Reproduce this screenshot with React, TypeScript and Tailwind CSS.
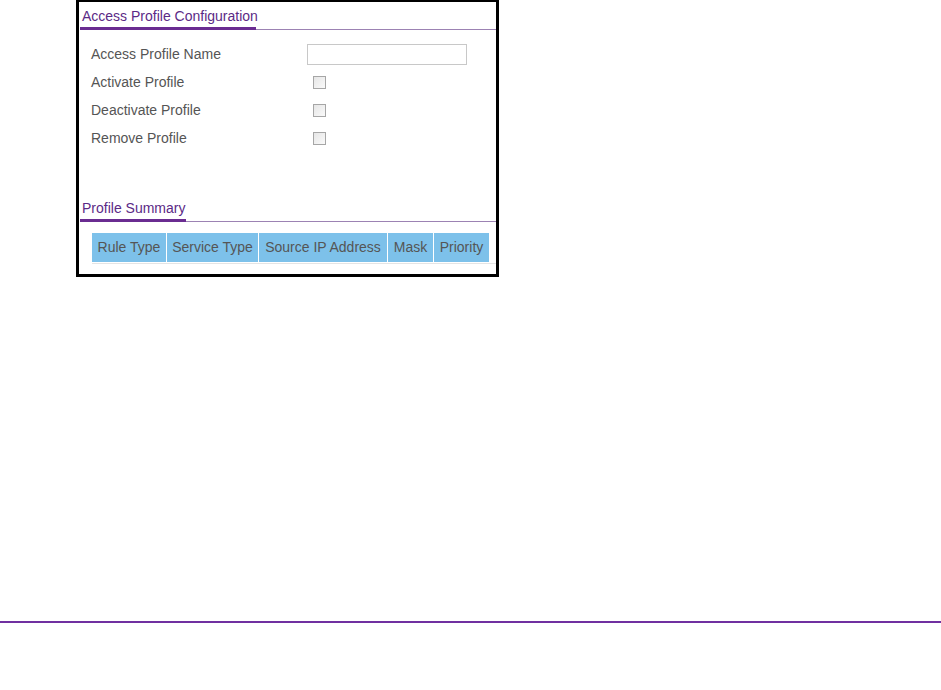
const font = { fontFamily: '"Liberation Sans", Arial, sans-serif' };

const rows = ["Activate Profile", "Deactivate Profile", "Remove Profile"];
const columns = [
  { label: "Rule Type", w: "w-[74px]" },
  { label: "Service Type", w: "w-[91px]" },
  { label: "Source IP Address", w: "w-[128px]" },
  { label: "Mask", w: "w-[45px]" },
  { label: "Priority", w: "w-[55px]" },
];

function SectionTitle({ title, underline }: { title: string; underline: string }) {
  return (
    <div className="flex items-end border-b border-[#9c82b3]">
      <div className={`${underline} -mb-px border-b-[3px] border-[#6a2c91] pb-[3px] pl-[2px] text-[14px] leading-[16px] whitespace-nowrap text-[#5b2a86]`}>
        {title}
      </div>
    </div>
  );
}

function Checkbox() {
  return (
    <span className="block h-[13px] w-[13px] border border-[#a6a6a6] bg-gradient-to-br from-[#e6e6e6] to-[#fafafa]" />
  );
}

export default function App() {
  return (
    <div className="relative h-[690px] w-[941px] bg-white" style={font}>
      <div className="ml-[76px] flex h-[277px] w-[423px] flex-col border-[3px] border-t-[2px] border-black pt-[6px] pl-[1px]">
        <SectionTitle title="Access Profile Configuration" underline="w-[176px]" />
        <div className="mt-[14px] flex h-[20px] items-center pl-[11px] text-[14px] text-[#555]">
          <span className="w-[216px]">Access Profile Name</span>
          <span className="h-[21px] w-[160px] border border-[#c8c8c8] bg-white" />
        </div>
        {rows.map((r) => (
          <div key={r} className="mt-[8px] flex h-[20px] items-center pl-[11px] text-[14px] text-[#555]">
            <span className="w-[222px]">{r}</span>
            <Checkbox />
          </div>
        ))}
        <div className="mt-[52px]">
          <SectionTitle title="Profile Summary" underline="w-[106px]" />
        </div>
        <div className="mt-[11px] ml-[12px] flex gap-px border-b border-[#e4e4e4] pb-px">
          {columns.map((c) => (
            <div
              key={c.label}
              className={`${c.w} flex h-[29px] items-center justify-center whitespace-nowrap bg-[#7dc1ea] text-[14px] text-[#555]`}
            >
              {c.label}
            </div>
          ))}
        </div>
      </div>
      <div className="absolute top-[621px] left-0 h-[2px] w-[941px] bg-[#7030a0]" />
    </div>
  );
}
